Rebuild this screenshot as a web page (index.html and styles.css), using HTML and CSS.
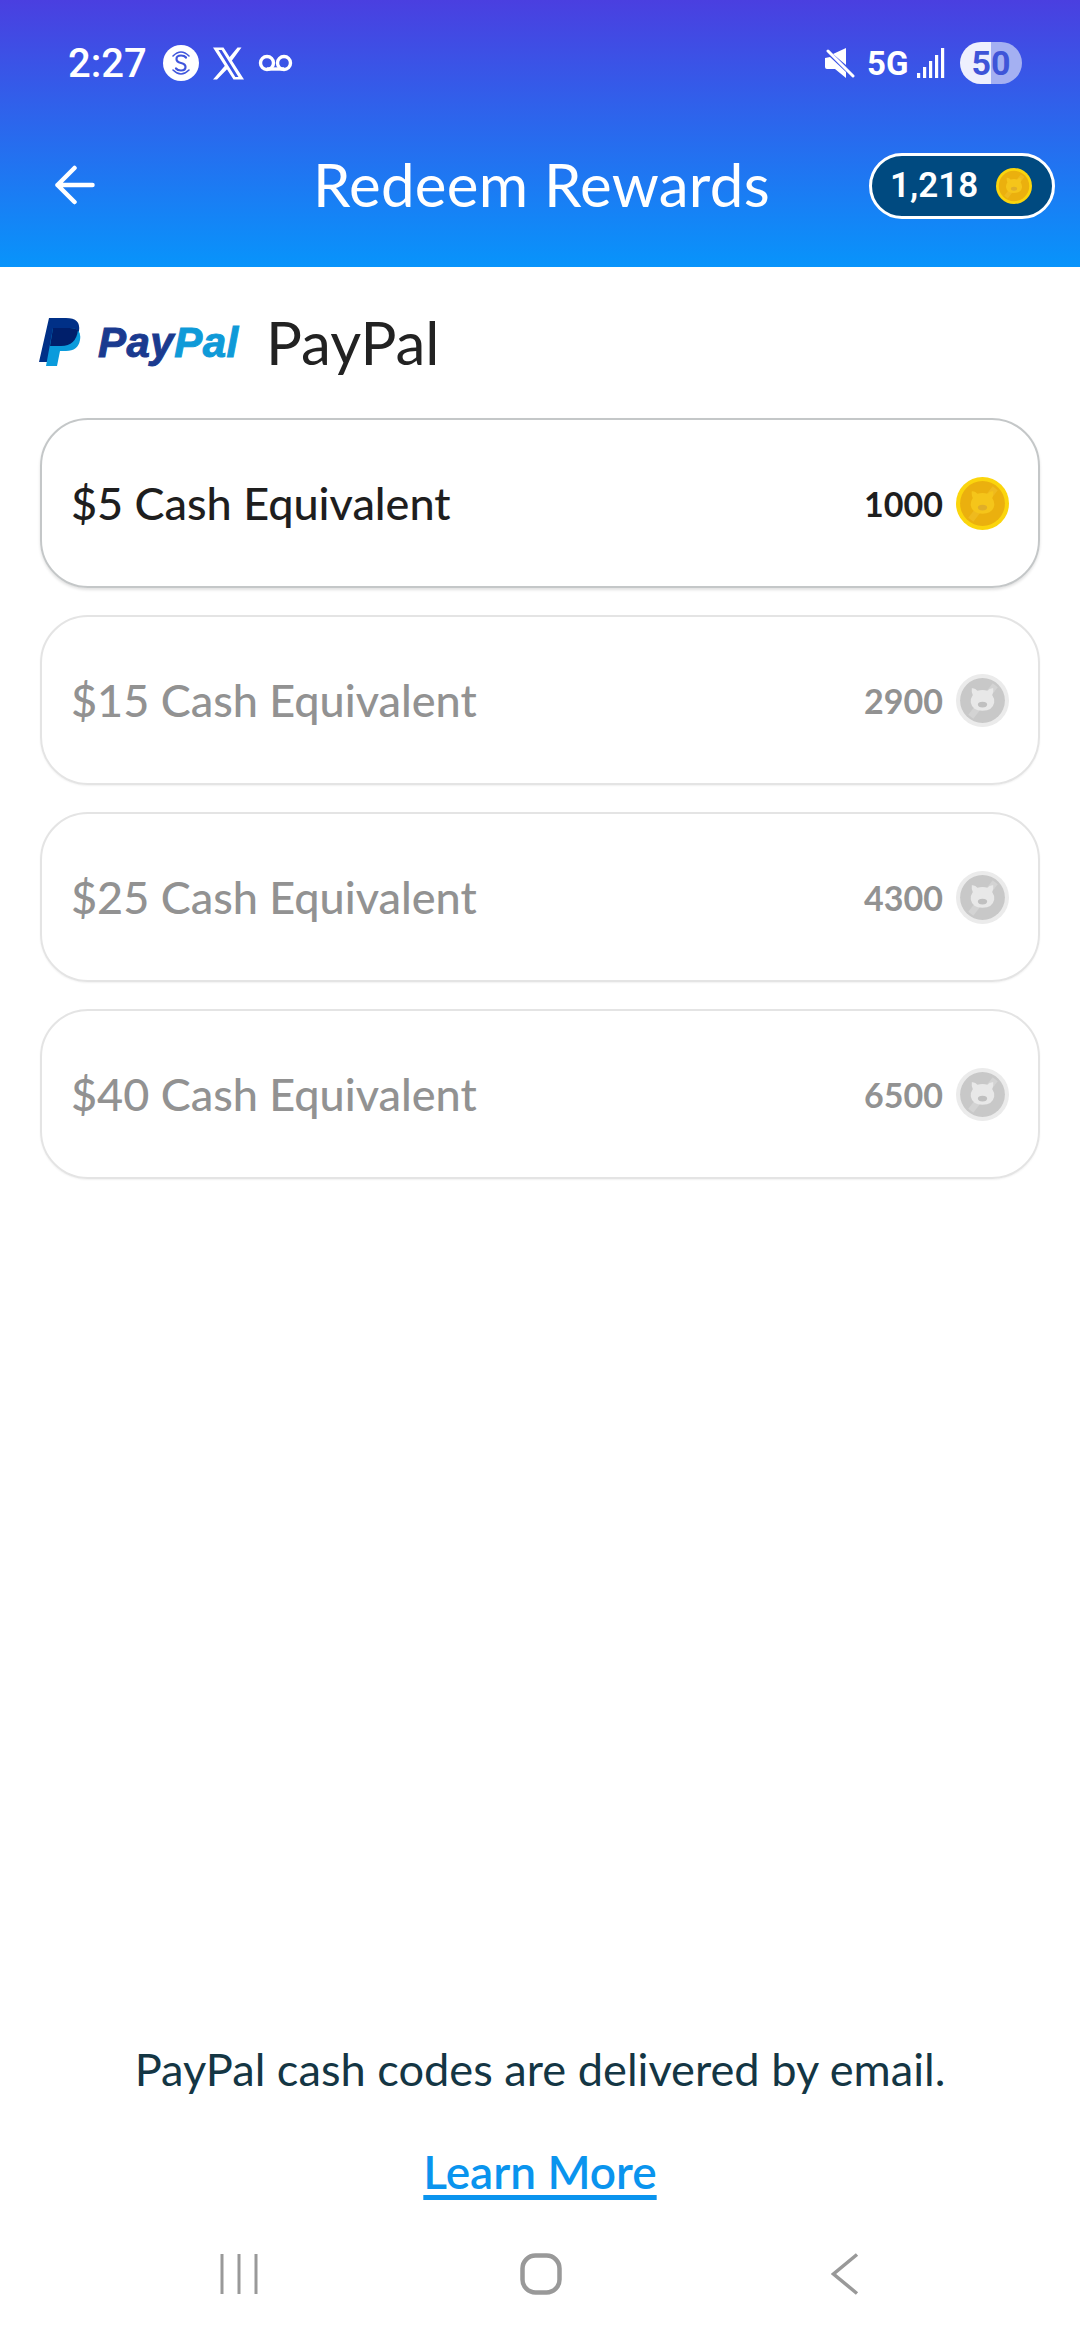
FILE: index.html
```html
<!DOCTYPE html>
<html lang="en">
<head>
    <meta charset="UTF-8">
    <meta name="viewport" content="width=device-width, initial-scale=1.0">
    <title>Redeem Rewards</title>
    <link rel="stylesheet" href="styles.css">
</head>
<body>

<svg class="defs" width="0" height="0">
    <symbol id="coin" viewBox="0 0 52 52">
        <circle class="coin-rim" cx="26" cy="26" r="26"/>
        <circle class="coin-face" cx="26" cy="26" r="22"/>
        <path class="coin-shine" d="M12 40 L36 9 L41 13 L17 44 Z"/>
        <path class="coin-pig" d="M15.500 14 Q19 13.500 21 16.500 Q26 15 31 16.500 Q33 13.500 36.500 14 Q37 18 35.500 20.500 Q38 24 37.500 28 Q36 36 26 36 Q16 36 14.500 28 Q14 24 16.500 20.500 Q15 18 15.500 14 Z"/>
        <ellipse class="coin-nose" cx="26" cy="30" rx="4.500" ry="2.800"/>
    </symbol>
</svg>

<header class="top">
    <div class="status">
        <div class="status-left">
            <span class="time">2:27</span>
            <svg class="ic-s" viewBox="0 0 36 36">
                <circle cx="18" cy="18" r="18" fill="#fff"/>
                <path d="M23 12.500 Q21.500 10.500 18 10.500 Q13.500 10.500 13.500 14 Q13.500 17 18 18 Q22.500 19 22.500 22 Q22.500 25.500 18 25.500 Q14.500 25.500 13 23.500" fill="none" stroke="#3f55dc" stroke-width="2.200" stroke-linecap="round"/>
                <path d="M10 11 Q18 3 26 11 M10 25 Q18 33 26 25" fill="none" stroke="#3f55dc" stroke-width="1.600" stroke-linecap="round"/>
            </svg>
            <svg class="ic-x" viewBox="0 0 32 33">
                <path d="M0.500 0.500 H11 L31.500 32.500 H21 Z M6 3 L22.800 30 H26 L9.200 3 Z" fill="#fff" fill-rule="evenodd"/>
                <path d="M29 0.500 H25 L15.500 12 L18 15.500 Z M13.500 17.500 L0.500 32.500 H4.500 L15.800 21 Z" fill="#fff"/>
            </svg>
            <svg class="ic-vm" viewBox="0 0 34 18">
                <path d="M8.500 15 H25.500" stroke="#fff" stroke-width="3.400"/>
                <circle cx="8.500" cy="9" r="6.500" fill="none" stroke="#fff" stroke-width="3.400"/>
                <circle cx="25.500" cy="9" r="6.500" fill="none" stroke="#fff" stroke-width="3.400"/>
            </svg>
        </div>
        <div class="status-right">
            <svg class="ic-mute" viewBox="0 0 30 30">
                <path d="M21 0 L21 17 L8 6 Z M0 10 L5 9 L21 24 L21 30 L10 21 L2 21 Q0 21 0 19 Z" fill="#fff"/>
                <path d="M3 3 L28 28" stroke="#fff" stroke-width="3" stroke-linecap="round"/>
            </svg>
            <span class="net">5G</span>
            <svg class="ic-signal" viewBox="0 0 28 30">
                <rect x="0" y="25" width="3.200" height="5" fill="#fff"/>
                <rect x="6" y="19" width="3.200" height="11" fill="#fff"/>
                <rect x="12" y="13" width="3.200" height="17" fill="#fff"/>
                <rect x="18" y="7" width="3.200" height="23" fill="#fff"/>
                <rect x="24" y="0" width="3.200" height="30" fill="#fff"/>
            </svg>
            <span class="battery">50</span>
        </div>
    </div>

    <div class="appbar">
        <svg class="back" viewBox="0 0 40 40">
            <path d="M20 3 L3 20 L20 37 M3 20 H38" fill="none" stroke="#fff" stroke-width="4.500" stroke-linecap="round" stroke-linejoin="round"/>
        </svg>
        <h1>Redeem Rewards</h1>
        <div class="balance">
            <span>1,218</span>
            <svg class="coin-sm gold"><use href="#coin"/></svg>
        </div>
    </div>
</header>

<main class="content">
    <div class="brand">
        <svg class="pp-mark" viewBox="0 0 42 48">
            <path d="M10 0 H27 Q42 0 40 13 Q38 28 22 28 H14 L11 44 H0 Z" fill="#003087"/>
            <path d="M14 10 H31 Q43 10 41 22 Q39 33 27 33 H21 L18 48 H7 Z" fill="#0a9bdc"/>
            <path d="M14 10 H31 Q36 10 39 12 Q37 28 22 28 H11 Z" fill="#001f6b"/>
        </svg>
        <span class="pp-word">Pay<span class="pp-light">Pal</span></span>
        <span class="brand-name">PayPal</span>
    </div>

    <div class="offers">
        <div class="offer">
            <span class="offer-name">$5 Cash Equivalent</span>
            <span class="offer-cost">1000</span>
            <svg class="coin gold"><use href="#coin"/></svg>
        </div>
        <div class="offer off">
            <span class="offer-name">$15 Cash Equivalent</span>
            <span class="offer-cost">2900</span>
            <svg class="coin grey"><use href="#coin"/></svg>
        </div>
        <div class="offer off">
            <span class="offer-name">$25 Cash Equivalent</span>
            <span class="offer-cost">4300</span>
            <svg class="coin grey"><use href="#coin"/></svg>
        </div>
        <div class="offer off">
            <span class="offer-name">$40 Cash Equivalent</span>
            <span class="offer-cost">6500</span>
            <svg class="coin grey"><use href="#coin"/></svg>
        </div>
    </div>
</main>

<footer class="bottom">
    <p class="note">PayPal cash codes are delivered by email.</p>
    <a class="learn" href="#">Learn More</a>
    <nav class="navbar">
        <svg class="nav-menu" viewBox="0 0 38 42">
            <path d="M2 1 V41 M19 1 V41 M36 1 V41" stroke="#999" stroke-width="3"/>
        </svg>
        <svg class="nav-home" viewBox="0 0 42 42">
            <rect x="2.500" y="2.500" width="37" height="37" rx="13" fill="none" stroke="#999" stroke-width="4.500"/>
        </svg>
        <svg class="nav-back" viewBox="0 0 28 42">
            <path d="M26 1.500 L2.500 21 L26 40.500" fill="none" stroke="#999" stroke-width="3.500"/>
        </svg>
    </nav>
</footer>

</body>
</html>
```

FILE: styles.css
```css
* {
    box-sizing: border-box;
}
body {
    margin: 0;
    width: 1080px;
    height: 2340px;
    display: flex;
    flex-direction: column;
    background: #fff;
    font-family: Lato, sans-serif;
    overflow: hidden;
}
.defs {
    position: absolute;
}

/* header */
.top {
    height: 267px;
    background: linear-gradient(180deg, #4a3fe0 0%, #0894fb 100%);
    color: #fff;
}
.status {
    height: 148px;
    padding: 42px 58px 0 68px;
    display: flex;
    justify-content: space-between;
    align-items: flex-start;
    font-family: Roboto, sans-serif;
}
.status-left, .status-right {
    display: flex;
    align-items: center;
    height: 42px;
}
.time {
    font-size: 40px;
    font-weight: 500;
    width: 95px;
}
.ic-s {
    width: 36px;
    height: 36px;
}
.ic-x {
    width: 33px;
    height: 33px;
    margin-left: 13px;
}
.ic-vm {
    width: 35px;
    height: 18px;
    margin-left: 13px;
}
.ic-mute {
    width: 30px;
    height: 30px;
}
.net {
    font-size: 33px;
    font-weight: 700;
    margin-left: 12px;
    width: 50px;
}
.ic-signal {
    width: 28px;
    height: 30px;
}
.battery {
    width: 62px;
    height: 42px;
    margin-left: 15px;
    border-radius: 21px;
    background: linear-gradient(90deg, #eef0fd 50%, #a4b0f2 50%);
    color: #3e55d8;
    font-size: 34px;
    font-weight: 700;
    text-align: center;
    line-height: 42px;
}
.appbar {
    display: grid;
    grid-template-columns: 1fr auto 1fr;
    align-items: center;
    height: 67px;
    padding: 0 25px;
}
.back {
    width: 41px;
    height: 40px;
    margin: 0 0 2px 29px;
}
h1 {
    margin: 0 0 4px 3px;
    font-size: 60px;
    font-weight: 400;
    letter-spacing: 0.3px;
}
.balance {
    justify-self: end;
    width: 186px;
    height: 66px;
    margin-bottom: 1px;
    border: 3px solid #fff;
    border-radius: 34px;
    background: #004a80;
    padding: 0 20px 0 18px;
    display: flex;
    align-items: center;
    justify-content: space-between;
    font-family: Roboto, sans-serif;
    font-size: 35px;
    font-weight: 600;
}
.coin-sm {
    width: 36px;
    height: 36px;
}

/* coins */
.gold {
    --rim: #fbd50d;
    --face: #ebb00e;
    --shine: #efba1e;
    --pig: #f5c51a;
    --nose: #e0ae28;
}
.grey {
    --rim: #ebebeb;
    --face: #c8c8c8;
    --shine: #d3d3d3;
    --pig: #e8e8e8;
    --nose: #c0c0c0;
}
.coin-rim { fill: var(--rim); }
.coin-face { fill: var(--face); }
.coin-shine { fill: var(--shine); }
.coin-pig { fill: var(--pig); }
.coin-nose { fill: var(--nose); }

/* list */
.content {
    flex: 1;
    padding: 0 40px;
}
.brand {
    display: flex;
    align-items: center;
    height: 151px;
    padding-bottom: 1px;
}
.pp-mark {
    width: 42px;
    height: 48px;
    margin-left: -1px;
}
.pp-word {
    margin-left: 17px;
    margin-top: 2px;
    width: 168px;
    font-family: "Liberation Sans", sans-serif;
    font-size: 42px;
    letter-spacing: 0.5px;
    font-weight: 700;
    font-style: italic;
    color: #1a3a8f;
    -webkit-text-stroke: 1px currentColor;
}
.pp-light {
    color: #0f9ad8;
}
.brand-name {
    font-size: 60px;
    color: #222;
}
.offers {
    display: flex;
    flex-direction: column;
    gap: 27px;
}
.offer {
    height: 170px;
    padding: 0 29px 0 29px;
    display: flex;
    align-items: center;
    border: 2px solid #c4c7c8;
    border-radius: 48px;
    box-shadow: 0 2px 3px rgba(0, 0, 0, 0.12);
    color: #1e1e1e;
}
.offer.off {
    border-color: #e4e4e4;
    box-shadow: 0 1px 2px rgba(0, 0, 0, 0.06);
    color: #929292;
}
.offer-name {
    flex: 1;
    font-size: 45px;
    font-weight: 500;
}
.offer-cost {
    font-size: 34px;
    font-weight: 700;
    margin-right: 13px;
}
.coin {
    width: 53px;
    height: 53px;
}

/* bottom */
.bottom {
    display: flex;
    flex-direction: column;
    align-items: center;
}
.note {
    margin: 0;
    font-size: 45.200px;
    line-height: 56px;
    color: #143644;
}
.learn {
    margin-top: 47px;
    font-size: 46px;
    font-weight: 600;
    line-height: 56px;
    color: #0a94ee;
    text-decoration: underline;
    text-decoration-thickness: 5px;
    text-underline-offset: 6px;
}
.navbar {
    width: 100%;
    height: 140px;
    padding: 53px 0 0 220px;
    display: flex;
    align-items: flex-start;
}
.nav-menu {
    width: 38px;
    height: 42px;
}
.nav-home {
    width: 42px;
    height: 42px;
    margin-left: 262px;
}
.nav-back {
    width: 28px;
    height: 42px;
    margin-left: 269px;
}
```
